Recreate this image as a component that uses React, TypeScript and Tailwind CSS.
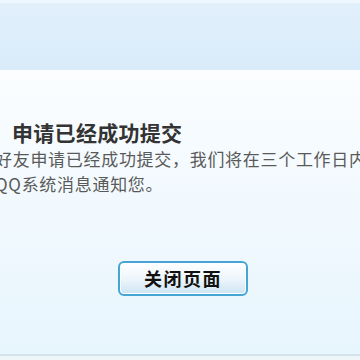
export default function App() {
    return (
        <div className="w-[360px] h-[360px] overflow-hidden flex flex-col bg-white" style={{ fontFamily: '"Noto Sans CJK SC", "Noto Sans", sans-serif' }}>
            {/* Top band */}
            <div className="h-[70px] shrink-0 flex flex-col bg-gradient-to-b from-[#e2f0fb] to-[#d9ebfa]">
                <div className="h-[3px] bg-[#eef7fd]" />
            </div>

            {/* Body */}
            <div className="flex-1 flex flex-col bg-gradient-to-b from-[#fbfdff] to-[#e7f5fd]">
                <h1 className="mt-[48px] ml-[12px] text-[21px] leading-[28px] font-bold text-[#333333] tracking-[0.3px] whitespace-nowrap">
                    申请已经成功提交
                </h1>
                <div className="-ml-[5px] text-[17px] leading-[25px] text-[#5a5a5a] tracking-[0.7px] whitespace-nowrap">
                    <p>好友申请已经成功提交，我们将在三个工作日内通过</p>
                    <p>QQ系统消息通知您。</p>
                </div>
                <div className="mt-[65px] ml-[118px]">
                    <button className="w-[130px] h-[35px] rounded-[6px] border-2 border-[#45a6d4] bg-gradient-to-b from-[#ffffff] via-[#eef6fb] to-[#cde4f3] text-[18px] font-bold text-[#111111] tracking-[1.5px] flex items-center justify-center shadow-[inset_0_0_0_1px_#ffffff]">
                        关闭页面
                    </button>
                </div>
            </div>

            {/* Bottom edge */}
            <div className="h-[2px] shrink-0 bg-[#d6e3ea]" />
            <div className="h-[4px] shrink-0 bg-[#eff6fa]" />
        </div>
    );
}
